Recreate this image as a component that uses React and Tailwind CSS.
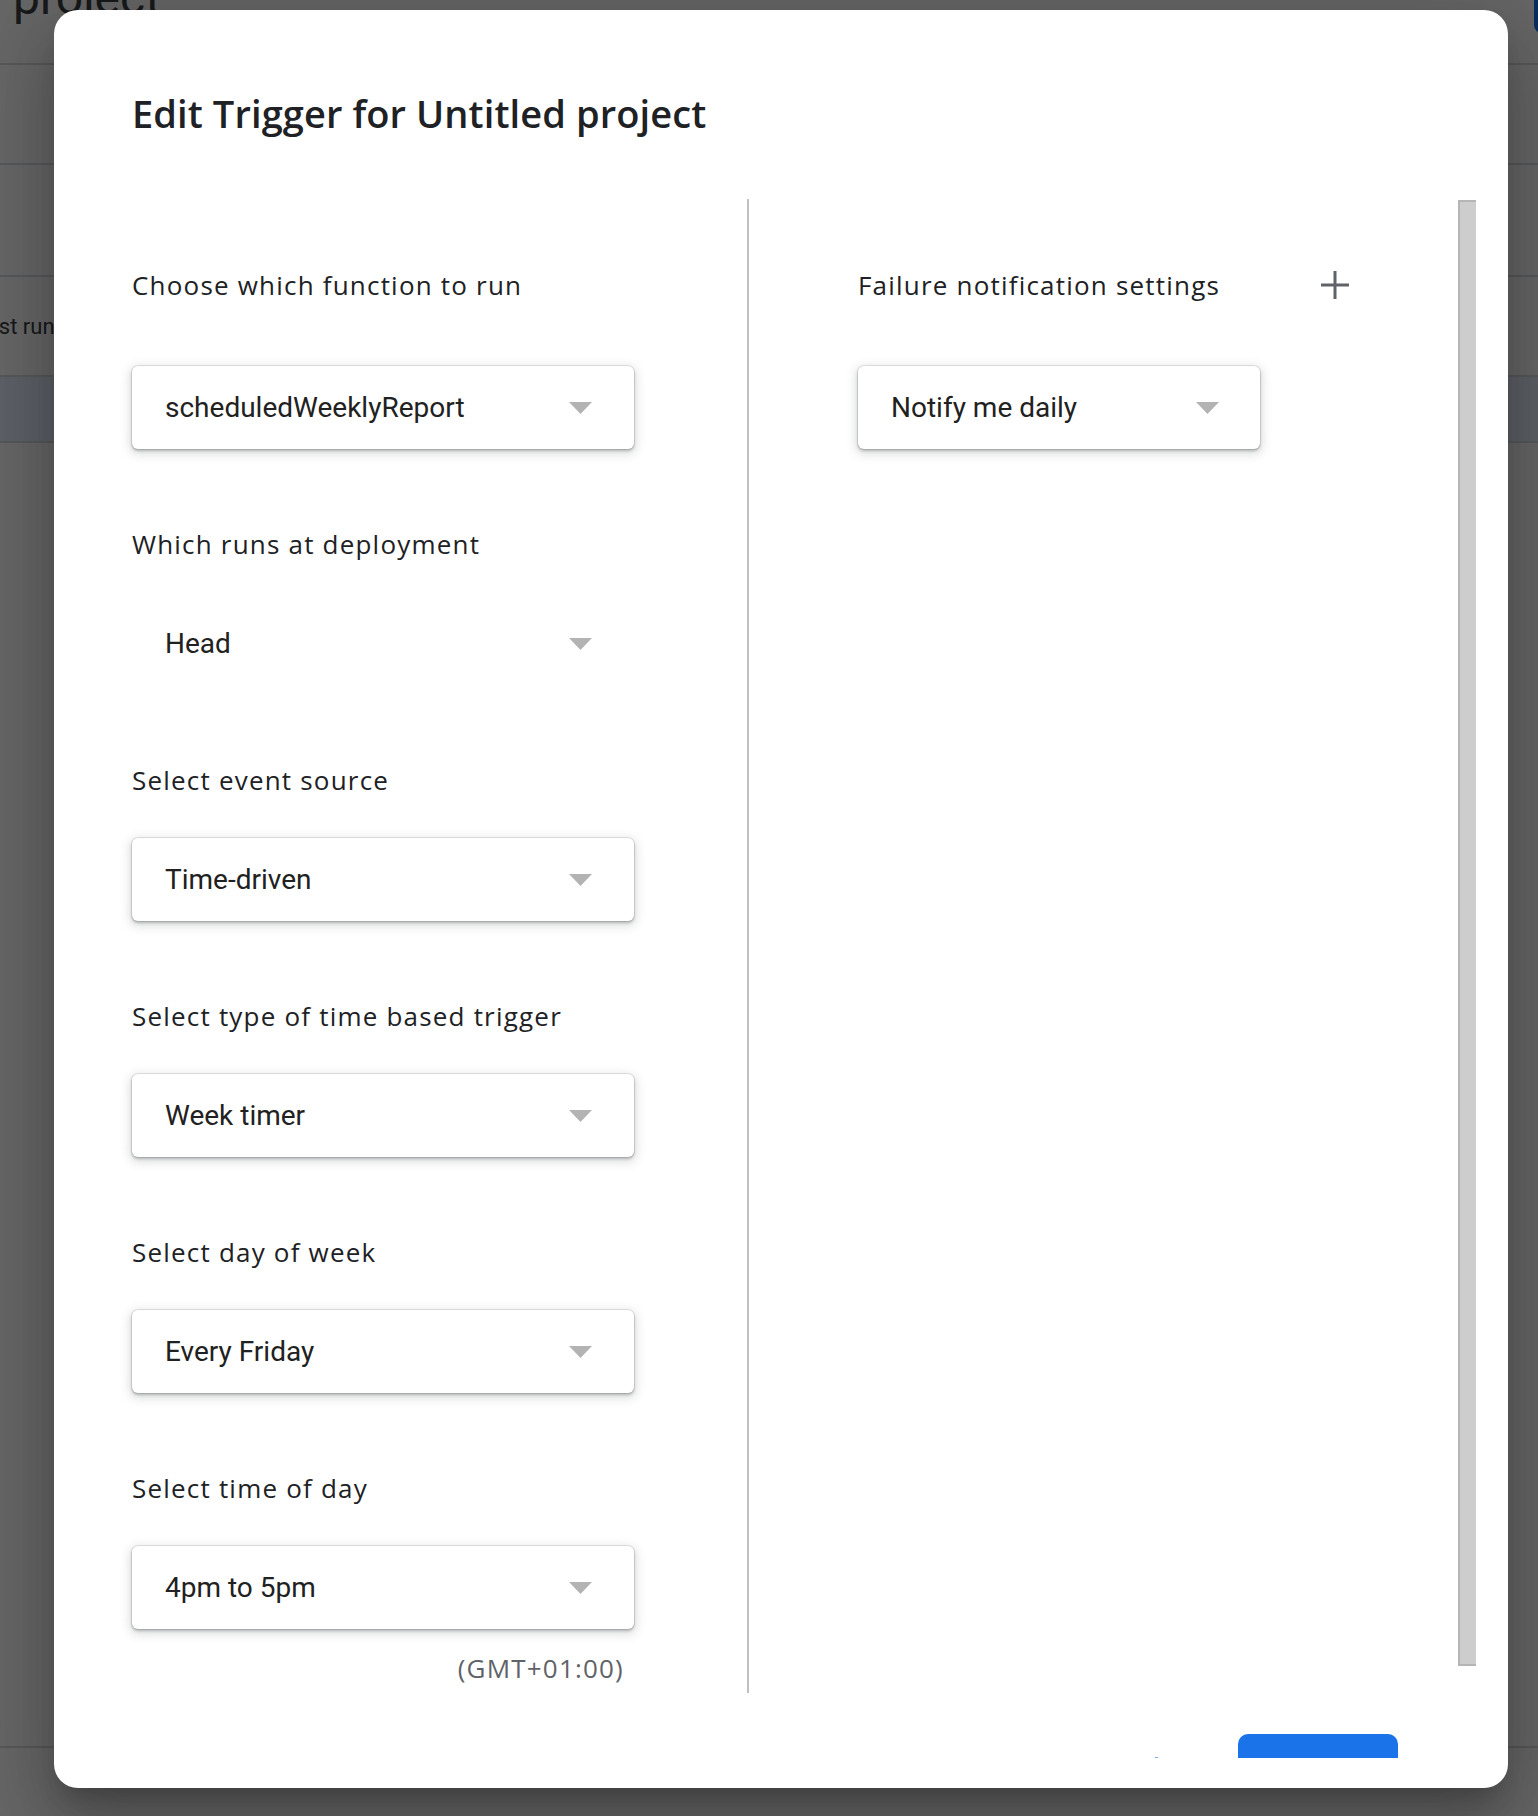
import { twMerge } from 'tailwind-merge';

const labelText =
  "font-['Open_Sans',sans-serif] text-[26px] leading-[36px] tracking-[1.2px] text-[#202124]";

const selectShadow =
  'shadow-[0_0_0_1px_rgba(60,64,67,0.12),0_2px_3px_rgba(60,64,67,0.3),0_3px_10px_3px_rgba(60,64,67,0.15)]';

export default function App() {
  return (
    <div className="relative h-[1816px] w-full overflow-hidden bg-white font-['Roboto',sans-serif]">
      <BackgroundPage />
      <div className="absolute inset-0 bg-black/60" />

      <div className="absolute left-[54px] top-[10px] flex h-[1778px] w-[1454px] flex-col rounded-[24px] bg-white pb-[30px] pl-[78px] pr-[32px] pt-[79px] shadow-[0_18px_25px_-12px_rgba(0,0,0,0.2),0_40px_63px_5px_rgba(0,0,0,0.16),0_15px_76px_13px_rgba(0,0,0,0.14)]">
        <h1 className="font-['Open_Sans',sans-serif] text-[38px] font-semibold leading-[48px] tracking-[0.1px] text-[#202124]">
          Edit Trigger for Untitled project
        </h1>

        <div className="mt-[62px] flex h-[1494px]">
          <div className="flex w-[615px] flex-col pt-[46px]">
            <div className="flex h-[80px] items-center">
              <span className={labelText}>Choose which function to run</span>
            </div>
            <Select className="mt-[41px]" value="scheduledWeeklyReport" />

            <Field label="Which runs at deployment" value="Head" plain />
            <Field label="Select event source" value="Time-driven" />
            <Field label="Select type of time based trigger" value="Week timer" />
            <Field label="Select day of week" value="Every Friday" />
            <Field label="Select time of day" value="4pm to 5pm" />

            <div className="mt-[21px] w-[502px] pr-[10px] text-right font-['Open_Sans',sans-serif] text-[26px] leading-[36px] tracking-[1.2px] text-[#5f6368]">
              (GMT+01:00)
            </div>
          </div>

          <div className="w-[2px] bg-[#bdc1c6]" />

          <div className="flex flex-1 flex-col pl-[109px] pt-[46px]">
            <div className="flex h-[80px] w-[517px] items-center justify-between">
              <span className={labelText}>Failure notification settings</span>
              <button type="button" className="flex h-[80px] w-[80px] items-center justify-center">
                <svg width="30" height="30" viewBox="0 0 30 30">
                  <path d="M15 1v28M1 15h28" stroke="#5f6368" strokeWidth="3" />
                </svg>
              </button>
            </div>
            <Select className="mt-[41px] w-[402px] pr-[41px]" value="Notify me daily" />
          </div>

          <div className="mt-[1px] h-[1466px] w-[18px] border-b-2 border-l-2 border-t-2 border-[#b5b5b5] bg-[#cdcdcd]" />
        </div>

        <div className="flex h-[65px] items-start justify-end overflow-hidden pr-[78px]">
          <span className="mr-[80px] mt-[64px] h-[1px] w-[3px] bg-[#7da7f0]" />
          <button type="button" className="mt-[41px] h-[48px] w-[160px] rounded-[10px] bg-[#1a73e8]" />
        </div>
      </div>
    </div>
  );
}

function Field({ label, value, plain }) {
  return (
    <div className="mt-[77px] flex flex-col">
      <div className="flex h-[36px] items-center">
        <span className={labelText}>{label}</span>
      </div>
      <Select className="mt-[40px]" value={value} plain={plain} />
    </div>
  );
}

function Select({ value, plain, className }) {
  return (
    <div
      className={twMerge(
        'flex h-[83px] w-[502px] items-center justify-between rounded-[6px] bg-white pl-[33px] pr-[42px]',
        !plain && selectShadow,
        className,
      )}
    >
      <span className="font-['Roboto',sans-serif] text-[28px] leading-none text-[#212121]">{value}</span>
      <svg width="23" height="12" viewBox="0 0 23 12">
        <polygon points="0,0 23,0 11.5,12" fill="#b3b3b3" />
      </svg>
    </div>
  );
}

// the project page sitting behind the dialog
function BackgroundPage() {
  return (
    <div className="flex flex-col">
      <div className="flex h-[65px] items-start justify-between border-b-2 border-[#dadce0]">
        <div className="-mt-[30px] pl-[13px] text-[48px] leading-[56px] text-[#3c4043]">project</div>
        <div className="-mr-[76px] -mt-[20px] h-[53px] w-[80px] rounded-[8px] bg-[#1a73e8]" />
      </div>
      <div className="h-[100px] border-b-2 border-[#dadce0]" />
      <div className="h-[112px] border-b-2 border-[#dadce0]" />
      <div className="flex h-[100px] items-center border-b-2 border-[#dadce0]">
        <span className="-ml-[25px] text-[22px] text-[#3c4043]">Last run</span>
      </div>
      <div className="h-[66px] border-b-2 border-[#dadce0] bg-[#e8f0fe]" />
      <div className="h-[1305px] border-b-2 border-[#dadce0]" />
    </div>
  );
}
